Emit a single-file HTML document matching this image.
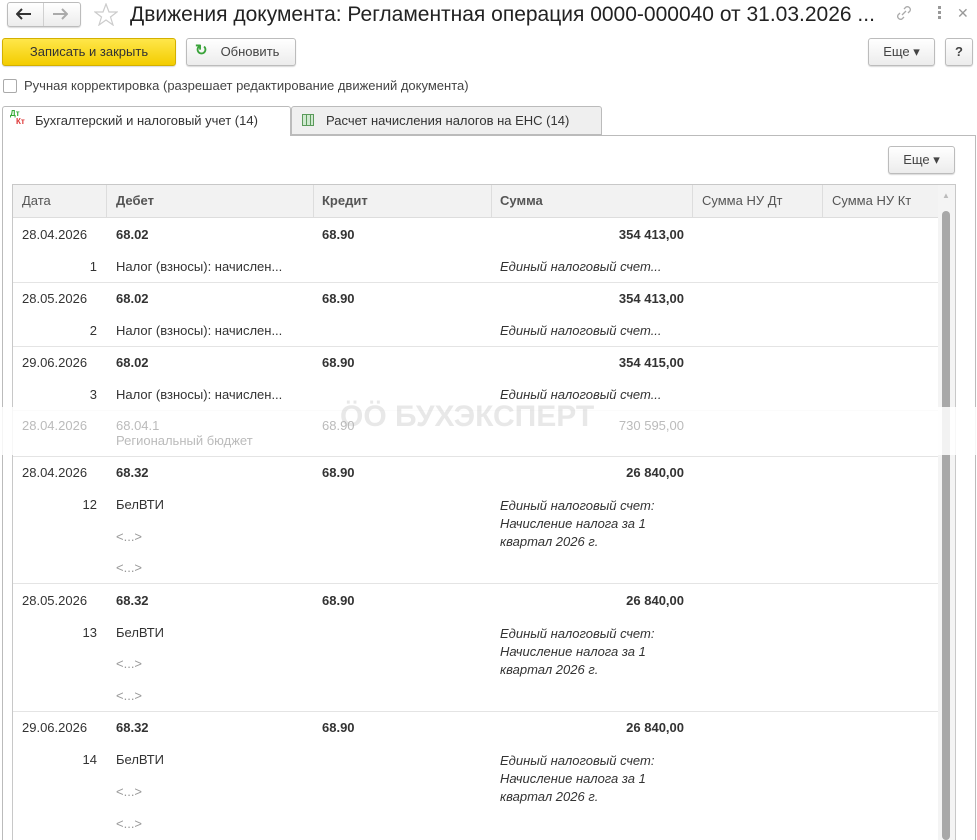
<!DOCTYPE html>
<html><head><meta charset="utf-8"><style>
*{box-sizing:border-box;margin:0;padding:0}
body{width:977px;height:840px;overflow:hidden;background:#fff;font-family:"Liberation Sans",sans-serif;color:#333;position:relative;font-size:13px}
.a{position:absolute;white-space:nowrap;line-height:16px}
.btn{position:absolute;border:1px solid #bcbcbc;border-radius:3px;background:linear-gradient(#fff,#ececec);box-shadow:0 1px 1px rgba(0,0,0,.15);font-size:13px;color:#444;text-align:center}
.b{font-weight:bold}
.i{font-style:italic}
.r{text-align:right}
.hl{position:absolute;left:13px;width:925px;height:1px;background:#e4e4e4}
.g{color:#bbb}
</style></head><body>
<div class="btn" style="left:7px;top:2px;width:74px;height:25px;border-radius:3px"></div>
<div style="position:absolute;left:43px;top:3px;width:1px;height:23px;background:#d0d0d0"></div>
<svg style="position:absolute;left:16px;top:8px" width="16" height="12"><path d="M1 6H15M6 1L1 6L6 11" stroke="#333" stroke-width="2" fill="none"/></svg>
<svg style="position:absolute;left:52px;top:8px" width="16" height="12"><path d="M1 6H15M10 1L15 6L10 11" stroke="#aaa" stroke-width="2" fill="none"/></svg>
<svg style="position:absolute;left:94px;top:3px" width="24" height="23"><path d="M12 1L15 9L23 9L16.5 14L19 22L12 17L5 22L7.5 14L1 9L9 9Z" stroke="#ccc" stroke-width="1.2" fill="none"/></svg>
<div class="a" style="left:130px;top:2px;font-size:21px;line-height:26px;color:#222">Движения документа: Регламентная операция 0000-000040 от 31.03.2026 ...</div>
<svg style="position:absolute;left:895px;top:4px" width="18" height="18"><path d="M7 11L11 7M5 9L3 11a3 3 0 0 0 4 4l2-2M13 9l2-2a3 3 0 0 0-4-4L9 5" stroke="#aaa" stroke-width="1.3" fill="none"/></svg>
<div style="position:absolute;left:938px;top:6px;width:3px;height:3px;background:#999"></div>
<div style="position:absolute;left:938px;top:11px;width:3px;height:3px;background:#999"></div>
<div style="position:absolute;left:938px;top:16px;width:3px;height:3px;background:#999"></div>
<div class="a" style="left:957px;top:5px;font-size:14px;color:#999">✕</div>
<div class="btn" style="left:2px;top:38px;width:174px;height:28px;background:linear-gradient(#ffe74a,#f3cd00);border-color:#d3b000;color:#333;line-height:26px">Записать и закрыть</div>
<div class="btn" style="left:186px;top:38px;width:110px;height:28px;line-height:26px;padding-left:18px">Обновить</div>
<div class="a" style="left:195px;top:43px;font-size:15px;color:#3aa33a;font-weight:bold">↻</div>
<div class="btn" style="left:868px;top:38px;width:67px;height:28px;line-height:26px">Еще ▾</div>
<div class="btn" style="left:945px;top:38px;width:28px;height:28px;line-height:26px;font-weight:bold">?</div>
<div style="position:absolute;left:3px;top:79px;width:14px;height:14px;border:1px solid #aaa;border-radius:2px;background:#fff"></div>
<div class="a" style="left:24px;top:78px;color:#444">Ручная корректировка (разрешает редактирование движений документа)</div>
<div style="position:absolute;left:2px;top:135px;width:974px;height:705px;border:1px solid #bbb;border-bottom:none"></div>
<div style="position:absolute;left:2px;top:106px;width:289px;height:30px;border:1px solid #bbb;border-bottom:none;background:#fff;border-radius:3px 3px 0 0"></div>
<div class="a" style="left:10px;top:110px;font-size:8px;line-height:8px;color:#3a3;font-weight:bold">Дт</div>
<div class="a" style="left:16px;top:118px;font-size:8px;line-height:8px;color:#d33;font-weight:bold">Кт</div>
<div class="a" style="left:35px;top:113px;color:#333">Бухгалтерский и налоговый учет (14)</div>
<div style="position:absolute;left:291px;top:106px;width:311px;height:29px;border:1px solid #bbb;background:#efefef;border-radius:3px 3px 0 0"></div>
<div style="position:absolute;left:302px;top:114px;width:12px;height:12px;border:1px solid #5a9a5a;background:repeating-linear-gradient(90deg,#cfe8cf 0 3px,#5a9a5a 3px 4px)"></div>
<div class="a" style="left:326px;top:113px;color:#333">Расчет начисления налогов на ЕНС (14)</div>
<div class="btn" style="left:888px;top:146px;width:67px;height:28px;line-height:26px">Еще ▾</div>
<div style="position:absolute;left:12px;top:184px;width:944px;height:656px;border:1px solid #c8c8c8;border-bottom:none"></div>
<div style="position:absolute;left:13px;top:185px;width:925px;height:33px;background:#f2f2f2;border-bottom:1px solid #ddd"></div>
<div style="position:absolute;left:106px;top:185px;width:1px;height:33px;background:#ddd"></div>
<div style="position:absolute;left:313px;top:185px;width:1px;height:33px;background:#ddd"></div>
<div style="position:absolute;left:491px;top:185px;width:1px;height:33px;background:#ddd"></div>
<div style="position:absolute;left:692px;top:185px;width:1px;height:33px;background:#ddd"></div>
<div style="position:absolute;left:822px;top:185px;width:1px;height:33px;background:#ddd"></div>
<div class="a" style="left:22px;top:193px;color:#555">Дата</div>
<div class="a b" style="left:116px;top:193px;color:#555">Дебет</div>
<div class="a b" style="left:322px;top:193px;color:#555">Кредит</div>
<div class="a b" style="left:500px;top:193px;color:#555">Сумма</div>
<div class="a" style="left:702px;top:193px;color:#555">Сумма НУ Дт</div>
<div class="a" style="left:832px;top:193px;color:#555">Сумма НУ Кт</div>
<div style="position:absolute;left:938px;top:185px;width:17px;height:655px;background:#f4f4f4"></div>
<div class="a" style="left:942px;top:188px;font-size:8px;color:#bbb">▲</div>
<div style="position:absolute;left:942px;top:211px;width:8px;height:629px;background:#a8a8a8;border-radius:4px"></div>

<div class="a" style="left:22px;top:227px">28.04.2026</div><div class="a b" style="left:116px;top:227px">68.02</div><div class="a b" style="left:322px;top:227px">68.90</div><div class="a b r" style="left:584px;top:227px;width:100px">354 413,00</div>
<div class="a r" style="left:40px;top:259px;width:57px">1</div><div class="a" style="left:116px;top:259px">Налог (взносы): начислен...</div><div class="a i" style="left:500px;top:259px">Единый налоговый счет...</div>
<div class="hl" style="top:282px"></div>
<div class="a" style="left:22px;top:291px">28.05.2026</div><div class="a b" style="left:116px;top:291px">68.02</div><div class="a b" style="left:322px;top:291px">68.90</div><div class="a b r" style="left:584px;top:291px;width:100px">354 413,00</div>
<div class="a r" style="left:40px;top:323px;width:57px">2</div><div class="a" style="left:116px;top:323px">Налог (взносы): начислен...</div><div class="a i" style="left:500px;top:323px">Единый налоговый счет...</div>
<div class="hl" style="top:346px"></div>
<div class="a" style="left:22px;top:355px">29.06.2026</div><div class="a b" style="left:116px;top:355px">68.02</div><div class="a b" style="left:322px;top:355px">68.90</div><div class="a b r" style="left:584px;top:355px;width:100px">354 415,00</div>
<div class="a r" style="left:40px;top:387px;width:57px">3</div><div class="a" style="left:116px;top:387px">Налог (взносы): начислен...</div><div class="a i" style="left:500px;top:387px">Единый налоговый счет...</div>
<div class="hl" style="top:410px"></div>
<div style="position:absolute;left:0;top:407px;width:977px;height:48px;background:rgba(255,255,255,.85)"></div>
<div class="a g" style="left:22px;top:418px">28.04.2026</div><div class="a g" style="left:116px;top:418px">68.04.1</div><div class="a g" style="left:322px;top:418px">68.90</div><div class="a g r" style="left:584px;top:418px;width:100px">730 595,00</div>
<div class="a g" style="left:116px;top:433px">Региональный бюджет</div>
<div class="a" style="left:340px;top:400px;font-size:30px;line-height:34px;font-weight:bold;color:rgba(180,180,180,.3)">ÖÖ БУХЭКСПЕРТ</div>
<div class="hl" style="top:456px"></div>
<div class="a" style="left:22px;top:465px">28.04.2026</div><div class="a b" style="left:116px;top:465px">68.32</div><div class="a b" style="left:322px;top:465px">68.90</div><div class="a b r" style="left:584px;top:465px;width:100px">26 840,00</div>
<div class="a r" style="left:40px;top:497px;width:57px">12</div><div class="a" style="left:116px;top:497px">БелВТИ</div>
<div class="a i" style="left:500px;top:497px;line-height:18px">Единый налоговый счет:<br>Начисление налога за 1<br>квартал 2026 г.</div>
<div class="a" style="left:116px;top:529px;color:#999">&lt;...&gt;</div><div class="a" style="left:116px;top:560px;color:#999">&lt;...&gt;</div>
<div class="hl" style="top:583px"></div>
<div class="a" style="left:22px;top:593px">28.05.2026</div><div class="a b" style="left:116px;top:593px">68.32</div><div class="a b" style="left:322px;top:593px">68.90</div><div class="a b r" style="left:584px;top:593px;width:100px">26 840,00</div>
<div class="a r" style="left:40px;top:625px;width:57px">13</div><div class="a" style="left:116px;top:625px">БелВТИ</div>
<div class="a i" style="left:500px;top:625px;line-height:18px">Единый налоговый счет:<br>Начисление налога за 1<br>квартал 2026 г.</div>
<div class="a" style="left:116px;top:656px;color:#999">&lt;...&gt;</div><div class="a" style="left:116px;top:688px;color:#999">&lt;...&gt;</div>
<div class="hl" style="top:711px"></div>
<div class="a" style="left:22px;top:720px">29.06.2026</div><div class="a b" style="left:116px;top:720px">68.32</div><div class="a b" style="left:322px;top:720px">68.90</div><div class="a b r" style="left:584px;top:720px;width:100px">26 840,00</div>
<div class="a r" style="left:40px;top:752px;width:57px">14</div><div class="a" style="left:116px;top:752px">БелВТИ</div>
<div class="a i" style="left:500px;top:752px;line-height:18px">Единый налоговый счет:<br>Начисление налога за 1<br>квартал 2026 г.</div>
<div class="a" style="left:116px;top:784px;color:#999">&lt;...&gt;</div><div class="a" style="left:116px;top:816px;color:#999">&lt;...&gt;</div>
</body></html>
